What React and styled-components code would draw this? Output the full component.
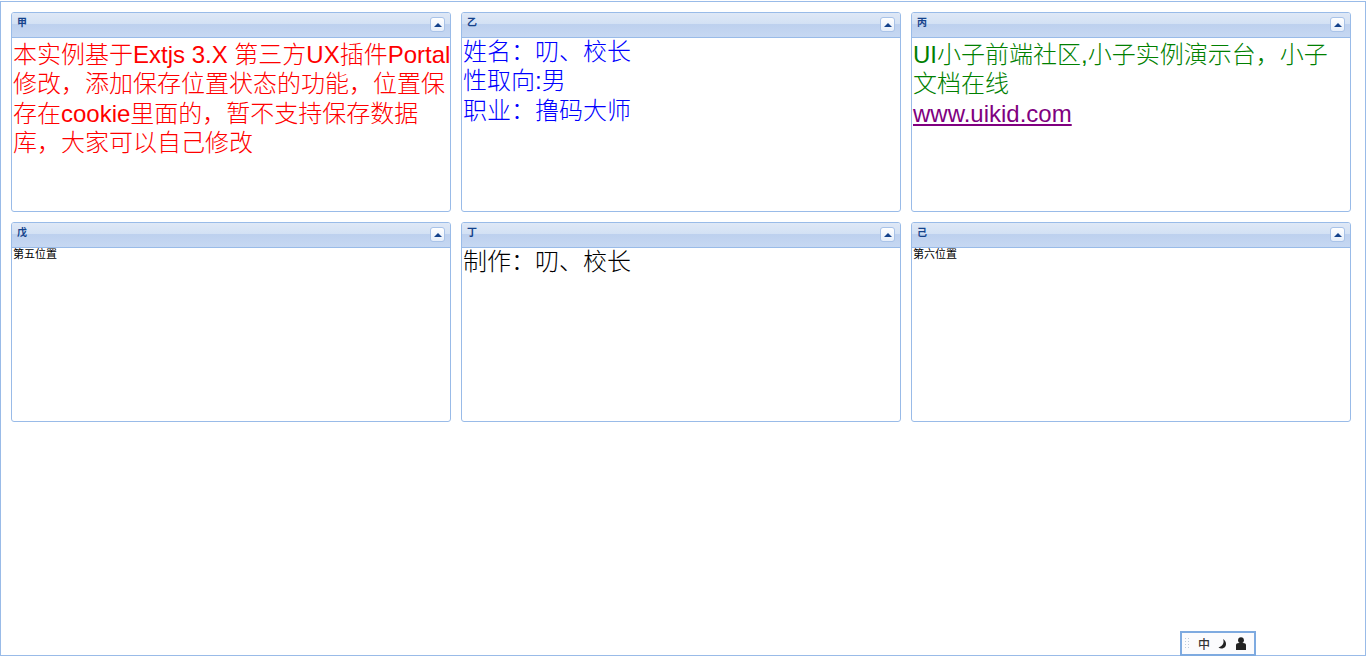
import React from "react";
import styled, { createGlobalStyle } from "styled-components";

const Global = createGlobalStyle`
  html, body {
    margin: 0;
    padding: 0;
    background: #fff;
    overflow: hidden;
  }
`;

const Viewport = styled.div`
  position: relative;
  box-sizing: border-box;
  width: 1366px;
  height: 655px;
  margin-top: 1px;
  padding: 10px 14px 0 10px;
  border: 1px solid #99bbe8;
  font-family: "Liberation Sans", "Noto Sans CJK SC", sans-serif;
`;

const Grid = styled.div`
  display: grid;
  grid-template-columns: repeat(3, 440px);
  grid-auto-rows: 200px;
  gap: 10px;
`;

const Panel = styled.section`
  box-sizing: border-box;
  display: flex;
  flex-direction: column;
  border: 1px solid #99bbe8;
  border-radius: 3px;
  overflow: hidden;
  background: #fff;
`;

const Header = styled.header`
  flex: none;
  box-sizing: border-box;
  height: 25px;
  display: flex;
  align-items: flex-start;
  justify-content: space-between;
  padding: 3px 5px 0 5px;
  border-bottom: 1px solid #99bbe8;
  background: linear-gradient(#dfe8f6 0, #d3e1f4 45%, #bdd0ee 46%, #c6d8f2 100%);
`;

const Title = styled.span`
  font-family: "Noto Sans CJK SC", sans-serif;
  font-size: 10px;
  line-height: 12px;
  font-weight: 700;
  color: #15428b;
`;

const Toggle = styled.button`
  box-sizing: border-box;
  width: 15px;
  height: 15px;
  margin-top: 1px;
  padding: 0;
  display: flex;
  align-items: center;
  justify-content: center;
  border: 1px solid #a9c3e8;
  border-radius: 3px;
  background: linear-gradient(#fff, #e6eefa);
  &::before {
    content: "";
    width: 0;
    height: 0;
    border-left: 4px solid transparent;
    border-right: 4px solid transparent;
    border-bottom: 4px solid #15428b;
  }
`;

const Body = styled.div`
  flex: 1;
  margin: ${(p) => (p.$offset ? "2px" : "-1px")} -1px 0 0;
  padding-left: 1px;
  font-size: 24px;
  font-weight: 300;
  line-height: 29.3px;
  color: ${(p) => p.$color || "#000"};
`;

const Small = styled.div`
  padding: 0 1px;
  font-size: 11px;
  line-height: 13px;
  color: #000;
`;

const SiteLink = styled.a`
  color: purple;
  text-decoration: underline;
`;

const ImeBar = styled.div`
  position: absolute;
  right: 109px;
  bottom: -1px;
  box-sizing: border-box;
  width: 76px;
  height: 25px;
  display: flex;
  align-items: center;
  padding: 0 4px 0 2px;
  border: 2px solid #7eaae0;
  background: #fbfbfd;
  color: #222;
`;

const Grip = styled.span`
  width: 6px;
  height: 13px;
  margin-right: 8px;
  background-image: radial-gradient(circle, #bccada 1px, transparent 1px);
  background-size: 3px 3px;
`;

const ImeGlyph = styled.span`
  margin-right: 8px;
  font-family: "Noto Sans CJK SC", sans-serif;
  font-size: 12px;
  font-weight: 500;
  line-height: 14px;
  color: #333;
`;

const MoonIcon = styled.svg`
  margin-right: 8px;
`;

const Moon = () => (
  <MoonIcon width="9" height="12" viewBox="0 0 9 12">
    <path d="M5 1 C6.5 4.5 5 8 .5 9.5 C3 11.5 8 10.5 8 6 C8 4 7 2.2 5 1Z" fill="#222" />
  </MoonIcon>
);

const Person = () => (
  <svg width="12" height="13" viewBox="0 0 12 13">
    <circle cx="6" cy="3.2" r="2.9" fill="#222" />
    <path d="M1 13 V8 C1 6.8 2 6.2 4 6 L8 6 C10 6.2 11 6.8 11 8 V13Z" fill="#222" />
  </svg>
);

function Box({ title, children }) {
  return (
    <Panel>
      <Header>
        <Title>{title}</Title>
        <Toggle />
      </Header>
      {children}
    </Panel>
  );
}

export default function App() {
  return (
    <>
      <Global />
      <Viewport>
        <Grid>
          <Box title="甲">
            <Body $color="red" $offset>
              本实例基于Extjs 3.X 第三方UX插件Portal修改，添加保存位置状态的功能，位置保存在cookie里面的，暂不支持保存数据库，大家可以自己修改
            </Body>
          </Box>
          <Box title="乙">
            <Body $color="blue">
              姓名：叨、校长
              <br />
              性取向:男
              <br />
              职业：撸码大师
            </Body>
          </Box>
          <Box title="丙">
            <Body $color="green" $offset>
              UI小子前端社区,小子实例演示台，小子文档在线
              <br />
              <SiteLink href="#">www.uikid.com</SiteLink>
            </Body>
          </Box>
          <Box title="戊">
            <Small>第五位置</Small>
          </Box>
          <Box title="丁">
            <Body>制作：叨、校长</Body>
          </Box>
          <Box title="己">
            <Small>第六位置</Small>
          </Box>
        </Grid>
        <ImeBar>
          <Grip />
          <ImeGlyph>中</ImeGlyph>
          <Moon />
          <Person />
        </ImeBar>
      </Viewport>
    </>
  );
}
